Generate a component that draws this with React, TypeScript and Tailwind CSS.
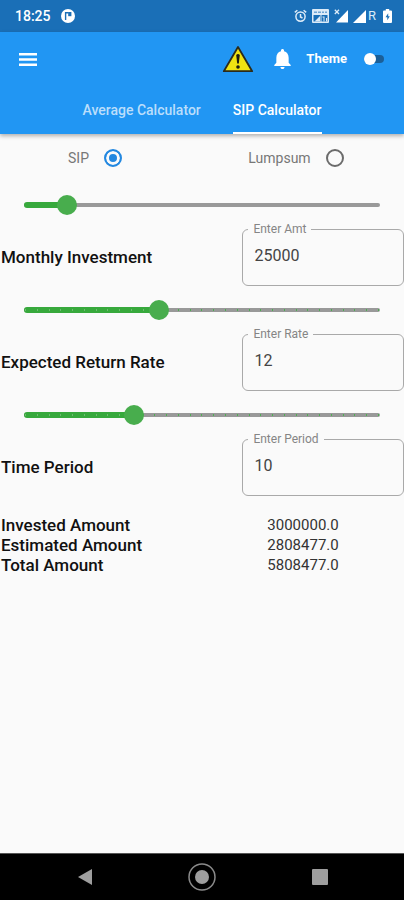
import { useState } from 'react'
import clsx from 'clsx'

type Mode = 'sip' | 'lumpsum'

const tabs = ['Average Calculator', 'SIP Calculator']

function StatusBar() {
  return (
    <div className="flex h-8 items-center justify-between bg-[#1a6fb7] pr-3 pl-[15px] text-white">
      <div className="flex items-center gap-[10px]">
        <span className="text-sm font-medium">18:25</span>
        <svg width="14" height="14" viewBox="0 0 14 14">
          <circle cx="7" cy="7" r="7" fill="#fff" />
          <path d="M4.600 11V3.700h3" fill="none" stroke="#1a6fb7" strokeWidth="1.400" />
          <path d="M7.200 3h3.200v4.200H7.200z" fill="#1a6fb7" />
        </svg>
      </div>
      <div className="flex items-center gap-[5px] text-[#dcebf8]">
        <svg width="13" height="14" viewBox="0 0 13 14" fill="none" stroke="currentColor" strokeWidth="1.5">
          <circle cx="6.5" cy="7.6" r="4.6" />
          <path d="M6.5 5v3l2 1M.8 3.4 3.4 1.2M12.2 3.4 9.6 1.2" />
        </svg>
        <svg width="17" height="14" viewBox="0 0 17 14">
          <rect width="17" height="14" rx="1" fill="currentColor" />
          <path d="M2 3.200h3M6 3.200h3M10 3.200h2M13 3.200h2" stroke="#6fa5d4" strokeWidth="1.400" />
          <path d="M1.500 6h7v6.500h-7zM9.500 6h6v6.500h-6z" fill="#1a6fb7" />
          <path d="M2.500 12.500 8 7v5.500zM10.500 7.500h2v5h-1v-4h-1zM14 9h1v3.500h-1z" fill="currentColor" />
        </svg>
        <svg width="14" height="14" viewBox="0 0 14 14">
          <path d="M14 1v12.5H2z" fill="#fff" />
          <path d="m.8.8 4.2 4.2M5 .8.8 5" stroke="currentColor" strokeWidth="1.3" />
        </svg>
        <div className="flex items-center gap-[2px]">
          <svg width="13" height="13" viewBox="0 0 13 13">
            <path d="M13 0v13H0z" fill="#fff" />
          </svg>
          <span className="text-[13px]">R</span>
        </div>
        <svg width="9" height="14" viewBox="0 0 9 14" className="ml-[2px]">
          <path d="M2.8 0h3.4v1.5H8q1 0 1 1V13q0 1-1 1H1q-1 0-1-1V2.500q0-1 1-1h1.800z" fill="#fff" />
          <path d="M5.200 4.300 2.500 8.300h1.800v3l2.500-4H5.200z" fill="#1a6fb7" />
        </svg>
      </div>
    </div>
  )
}

interface SliderProps {
  label: string
  value: number
  ticks?: number
  onChange: (v: number) => void
}

function Slider({ label, value, ticks = 0, onChange }: SliderProps) {
  return (
    <div className="relative flex h-12 items-center px-[14px]">
      <div className="absolute inset-x-6 h-1 rounded-full bg-[#999999]" />
      <div className="absolute inset-x-6 h-[6px]">
        <div className="h-full rounded-full bg-[#37a93c]" style={{ width: `${value}%` }} />
      </div>
      <div className="absolute inset-x-6 flex justify-between px-px">
        {Array.from({ length: ticks }, (_, i) => (
          <span
            key={i}
            className={clsx('h-[2px] w-px', (i / (ticks - 1)) * 100 < value ? 'bg-[#6dbb70]' : 'bg-[#4caf50]')}
          />
        ))}
      </div>
      <input
        type="range"
        aria-label={label}
        min={0}
        max={100}
        value={value}
        onChange={e => onChange(Number(e.target.value))}
        className="relative h-5 w-full appearance-none bg-transparent outline-none [&::-webkit-slider-thumb]:size-5 [&::-webkit-slider-thumb]:appearance-none [&::-webkit-slider-thumb]:rounded-full [&::-webkit-slider-thumb]:bg-[#48ad4d]"
      />
    </div>
  )
}

interface FieldProps {
  id: string
  title: string
  label: string
  initial: string
  slider: number
  ticks?: number
}

function Field({ id, title, label, initial, slider, ticks }: FieldProps) {
  const [text, setText] = useState(initial)
  const [pos, setPos] = useState(slider)

  return (
    <section>
      <Slider label={title} value={pos} ticks={ticks} onChange={setPos} />
      <div className="flex items-center justify-between">
        <h2 className="pl-px text-[17px] font-medium text-[#111111]">{title}</h2>
        <div className="relative w-2/5">
          <input
            id={id}
            value={text}
            onChange={e => setText(e.target.value)}
            className="block h-[57px] w-full rounded-md border border-[#a9a9a9] bg-transparent px-[11px] pb-1 text-base text-[#444444] outline-none"
          />
          <label htmlFor={id} className="absolute -top-2 left-[6px] bg-[#fafafa] px-[5px] text-xs leading-4 text-[#858585]">
            {label}
          </label>
        </div>
      </div>
    </section>
  )
}

export default function App() {
  const [tab, setTab] = useState(1)
  const [mode, setMode] = useState<Mode>('sip')
  const [dark, setDark] = useState(false)

  const results = [
    ['Invested Amount', '3000000.0'],
    ['Estimated Amount', '2808477.0'],
    ['Total Amount', '5808477.0'],
  ]

  return (
    <div className="flex min-h-screen flex-col bg-[#fafafa] font-[Roboto,sans-serif]">
      <StatusBar />

      <header className="bg-[#2196f3] text-white shadow-[0_2px_4px_rgba(0,0,0,0.3)]">
        <div className="flex h-[54px] items-center justify-between pr-5 pl-[19px]">
          <button aria-label="Menu">
            <svg width="18" height="13" viewBox="0 0 18 13" fill="#fff">
              <path d="M0 0h18v2.400H0zM0 5.300h18v2.400H0zM0 10.600h18V13H0z" />
            </svg>
          </button>
          <div className="flex items-center">
            <button aria-label="Warnings">
              <svg width="32" height="28" viewBox="0 0 32 28">
                <path d="M16 2 30.200 26.200H1.800z" fill="#efe312" stroke="#2b2b1c" strokeWidth="1.800" strokeLinejoin="round" />
                <path d="M14.200 10q1.800-2 3.600 0l-1 8.500h-1.600z" fill="#1c1c10" />
                <circle cx="16" cy="22" r="1.800" fill="#1c1c10" />
              </svg>
            </button>
            <button aria-label="Notifications" className="ml-5">
              <svg width="17" height="20" viewBox="0 0 16 19.500" fill="#fff">
                <path d="M8 19.500c1.100 0 2-.9 2-2H6c0 1.100.9 2 2 2zm6-6v-5c0-3.070-1.640-5.640-4.500-6.320V1.500C9.500.67 8.830 0 8 0S6.500.67 6.500 1.500v.68C3.630 2.860 2 5.420 2 8.500v5l-2 2v1h16v-1l-2-2z" />
              </svg>
            </button>
            <label htmlFor="theme" className="ml-[15px] text-[13px] font-bold">Theme</label>
            <span className="relative ml-[17px] flex h-3 w-5 items-center">
              <span className="h-2 w-full rounded-full bg-[#1b5f98]" />
              <input
                id="theme"
                type="checkbox"
                role="switch"
                checked={dark}
                onChange={e => setDark(e.target.checked)}
                className={clsx('absolute size-3 appearance-none rounded-full bg-white', dark ? 'right-0' : 'left-0')}
              />
            </span>
          </div>
        </div>
        <nav className="flex h-12 justify-center" role="tablist">
          {tabs.map((t, i) => (
            <button key={t} role="tab" aria-selected={tab === i} onClick={() => setTab(i)} className="flex px-4">
              <span
                className={clsx(
                  'flex h-full items-center border-y-2 border-t-transparent text-sm font-medium',
                  tab === i ? 'border-b-white' : 'border-b-transparent text-[#bbdefb]',
                )}
              >
                {t}
              </span>
            </button>
          ))}
        </nav>
      </header>

      <main className="flex-1">
        <div className="grid h-[47px] grid-cols-2 pl-[2px]">
          {(['sip', 'lumpsum'] as Mode[]).map(m => (
            <label key={m} className="flex items-center justify-center text-sm text-[#777777]">
              {m === 'sip' ? 'SIP' : 'Lumpsum'}
              <span className="flex w-12 justify-center">
                <input
                  type="radio"
                  name="mode"
                  checked={mode === m}
                  onChange={() => setMode(m)}
                  className="size-[18px] appearance-none rounded-full border-2 border-[#6b6b6b] checked:border-[#2388e0] checked:bg-[#2388e0] checked:shadow-[inset_0_0_0_3px_#fafafa]"
                />
              </span>
            </label>
          ))}
        </div>

        <Field id="amt" title="Monthly Investment" label="Enter Amt" initial="25000" slider={12} />
        <Field id="rate" title="Expected Return Rate" label="Enter Rate" initial="12" slider={38} ticks={31} />
        <Field id="period" title="Time Period" label="Enter Period" initial="10" slider={31} ticks={31} />

        <dl className="pt-[19px]">
          {results.map(([name, value]) => (
            <div key={name} className="grid grid-cols-2 leading-5">
              <dt className="pl-px text-[17px] leading-5 font-medium text-[#111111]">{name}</dt>
              <dd className="text-center text-[15px] leading-5 text-[#333333]">{value}</dd>
            </div>
          ))}
        </dl>
      </main>

      <footer className="grid h-[47px] grid-cols-[1fr_66px_1fr] items-center border-t border-[#555555] bg-black">
        <button aria-label="Back" className="justify-self-center">
          <svg width="14" height="16" viewBox="0 0 14 16" fill="#9e9e9e">
            <path d="M14 0v16L0 8z" />
          </svg>
        </button>
        <button aria-label="Home" className="justify-self-center">
          <svg width="28" height="28" viewBox="0 0 28 28">
            <circle cx="14" cy="14" r="13" fill="none" stroke="#8a8a8a" strokeWidth="1.500" />
            <circle cx="14" cy="14" r="7" fill="#9e9e9e" />
          </svg>
        </button>
        <button aria-label="Recent apps" className="justify-self-center">
          <svg width="16" height="16" viewBox="0 0 16 16">
            <rect width="16" height="16" rx="1" fill="#9e9e9e" />
          </svg>
        </button>
      </footer>
    </div>
  )
}
